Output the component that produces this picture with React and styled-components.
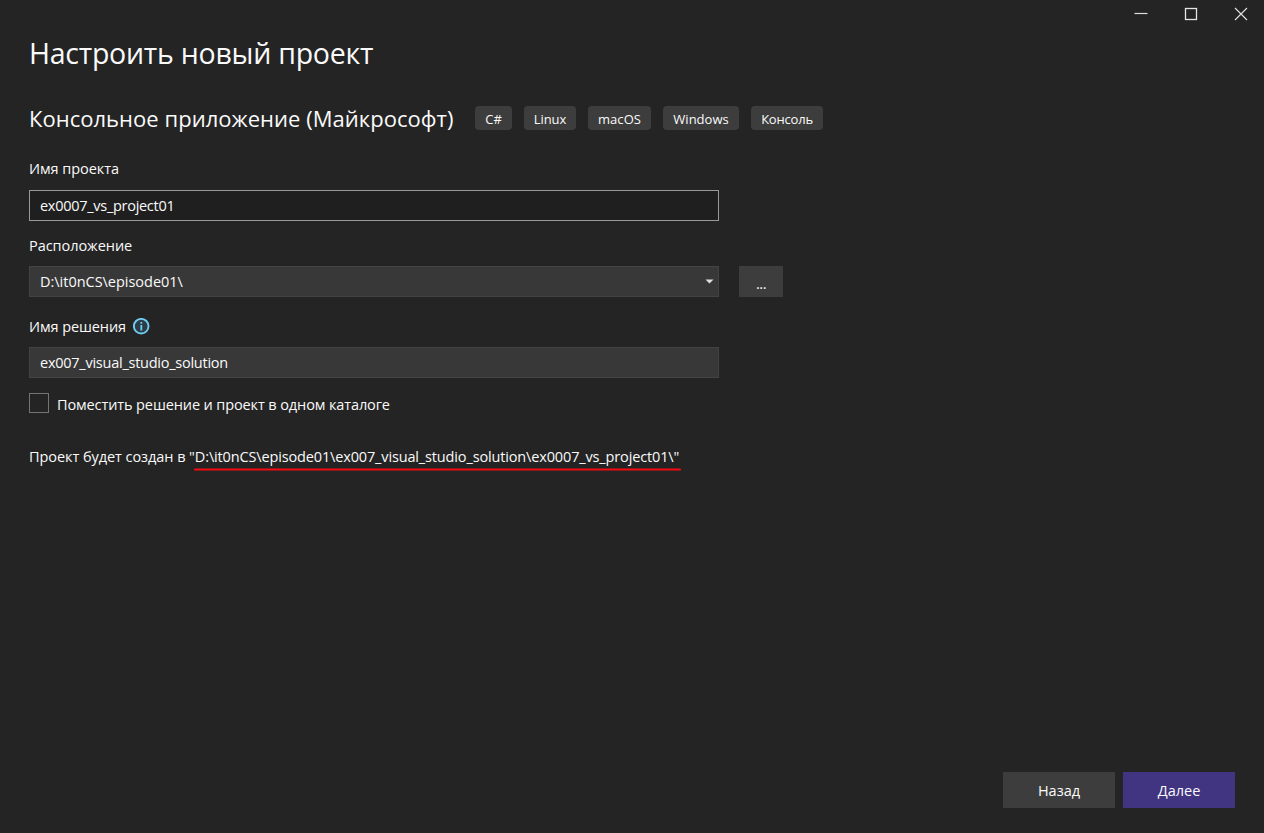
import React from "react";
import styled, { createGlobalStyle } from "styled-components";

const GlobalStyle = createGlobalStyle`
  *, *::before, *::after { box-sizing: border-box; }
  body {
    margin: 0;
    background: #242424;
    color: #fafafa;
    font-family: "Open Sans", "Noto Sans", sans-serif;
    font-size: 14.5px;
    overflow: hidden;
  }
  button, input { font: inherit; color: inherit; }
`;

const Window = styled.div`
  width: 1264px;
  height: 833px;
  display: flex;
  flex-direction: column;
  background: #242424;
`;

const TitleBar = styled.header`
  height: 28px;
  flex: none;
  display: flex;
  justify-content: flex-end;
  padding-right: 2px;
`;

const WindowButton = styled.button`
  width: 42px;
  height: 28px;
  margin-left: 8px;
  padding: 0;
  border: 0;
  background: none;
  display: flex;
  align-items: center;
  justify-content: center;
  svg { display: block; }
`;

const Content = styled.main`
  flex: 1;
  display: flex;
  flex-direction: column;
  align-items: flex-start;
  padding-left: 29px;
`;

const Text = styled.span`
  display: block;
  white-space: pre;
  letter-spacing: ${(p) => p.$track || 0}px;
`;

const Title = styled.h1`
  margin: 3px 0 0;
  height: 44px;
  line-height: 44px;
  font-size: 28.5px;
  font-weight: 400;
`;

const Heading = styled.div`
  margin-top: 31px;
  height: 24px;
  display: flex;
  align-items: center;
`;

const Subtitle = styled.h2`
  margin: 0;
  width: 446px;
  line-height: 26px;
  font-size: 22px;
  font-weight: 400;
`;

const Chips = styled.div`
  display: flex;
  gap: 12px;
`;

const Chip = styled.span`
  width: ${(p) => p.$width}px;
  height: 24px;
  padding-top: 2px;
  border-radius: 4px;
  background: #3d3d3d;
  font-size: 13px;
  line-height: 22px;
  display: flex;
  justify-content: center;
`;

const Label = styled.label`
  height: 20px;
  margin-top: ${(p) => p.$top}px;
  line-height: 22px;
  display: flex;
  gap: 7px;
  svg { display: block; margin-top: 2px; }
`;

const Row = styled.div`
  display: flex;
  gap: 20px;
  margin-top: ${(p) => p.$top}px;
`;

const Field = styled.div`
  width: 690px;
  height: 31px;
  padding: 0 4px 0 10px;
  border: 1px solid ${(p) => (p.$active ? "#999999" : "#434343")};
  background: ${(p) => (p.$active ? "#1f1f1f" : "#383838")};
  line-height: 29px;
  display: flex;
  justify-content: space-between;
  align-items: center;
`;

const BrowseButton = styled.button`
  width: 44px;
  height: 31px;
  padding: 4px 0 0;
  border: 0;
  background: #3d3d3d;
  line-height: 27px;
  display: flex;
  justify-content: center;
`;

const CheckRow = styled.label`
  display: flex;
  gap: 8px;
  margin-top: 15px;
  height: 20px;
  line-height: 24px;
`;

const CheckBox = styled.input`
  appearance: none;
  width: 20px;
  height: 20px;
  margin: 0;
  border: 1px solid #747474;
  background: #242424;
`;

const Summary = styled.p`
  margin: 33px 0 0;
  height: 25px;
  line-height: 22px;
  display: flex;
`;

const Path = styled.span`
  height: 25px;
  width: 487px;
  display: flex;
  flex-direction: column;
  justify-content: space-between;
  margin-left: -1px;
`;

const PathText = styled(Text)`
  padding-left: 1px;
`;

const RedLine = styled.svg`
  display: block;
  flex: none;
`;

const Footer = styled.footer`
  display: flex;
  justify-content: flex-end;
  gap: 8px;
  padding: 0 29px 25px 0;
`;

const ActionButton = styled.button`
  width: 112px;
  height: 36px;
  padding: 0;
  border: 0;
  background: ${(p) => (p.$primary ? "#413480" : "#3d3d3d")};
  line-height: 38px;
  display: flex;
  justify-content: center;
`;

const chips = [
  { name: "C#", width: 37, track: 0 },
  { name: "Linux", width: 52, track: -0.1 },
  { name: "macOS", width: 63, track: 0.1 },
  { name: "Windows", width: 76, track: 0 },
  { name: "Консоль", width: 72, track: -0.2 },
];

export default function App() {
  return (
    <Window>
      <GlobalStyle />
      <TitleBar>
        <WindowButton aria-label="Свернуть">
          <svg width="14" height="14" viewBox="0 0 14 14">
            <path d="M0.5 6.5h13" stroke="#dcdcdc" strokeWidth="1.2" />
          </svg>
        </WindowButton>
        <WindowButton aria-label="Развернуть">
          <svg width="14" height="14" viewBox="0 0 14 14">
            <rect x="1.5" y="1.5" width="11" height="11" fill="none" stroke="#e4e4e4" strokeWidth="1.3" />
          </svg>
        </WindowButton>
        <WindowButton aria-label="Закрыть">
          <svg width="14" height="14" viewBox="0 0 14 14">
            <path d="M1 1l12 12M13 1L1 13" stroke="#e4e4e4" strokeWidth="1.1" />
          </svg>
        </WindowButton>
      </TitleBar>
      <Content>
        <Title><Text $track={-0.25}>Настроить новый проект</Text></Title>
        <Heading>
          <Subtitle><Text $track={0.03}>Консольное приложение (Майкрософт)</Text></Subtitle>
          <Chips>
            {chips.map((c) => (
              <Chip key={c.name} $width={c.width}><Text $track={c.track}>{c.name}</Text></Chip>
            ))}
          </Chips>
        </Heading>
        <Label $top={28}><Text $track={-0.05}>Имя проекта</Text></Label>
        <Row $top={12}>
          <Field $active><Text $track={-0.28}>ex0007_vs_project01</Text></Field>
        </Row>
        <Label $top={14}><Text $track={-0.05}>Расположение</Text></Label>
        <Row $top={11}>
          <Field>
            <Text $track={-0.02}>D:\it0nCS\episode01\</Text>
            <svg width="9" height="5" viewBox="0 0 9 5">
              <path d="M0.5 0.5h8l-4 4z" fill="#e0e0e0" />
            </svg>
          </Field>
          <BrowseButton><Text $track={-0.4}>...</Text></BrowseButton>
        </Row>
        <Label $top={19}>
          <Text $track={-0.08}>Имя решения</Text>
          <svg width="17" height="17" viewBox="0 0 17 17">
            <circle cx="8.2" cy="8.2" r="7.3" fill="#2b3c45" stroke="#6fcdf2" strokeWidth="1.9" />
            <path d="M8.3 7v5.4M8.3 4v1.7" stroke="#6fcdf2" strokeWidth="1.8" />
          </svg>
        </Label>
        <Row $top={11}>
          <Field><Text $track={-0.25}>ex007_visual_studio_solution</Text></Field>
        </Row>
        <CheckRow>
          <CheckBox type="checkbox" />
          <Text $track={-0.11}>Поместить решение и проект в одном каталоге</Text>
        </CheckRow>
        <Summary>
          <Text $track={-0.06}>Проект будет создан в "</Text>
          <Path>
            <PathText $track={-0.145}>D:\it0nCS\episode01\ex007_visual_studio_solution\ex0007_vs_project01\"</PathText>
            <RedLine width="487" height="3" viewBox="0 0 487 3">
              <path d="M1 1.5h485" stroke="#f50a10" strokeWidth="2.2" strokeLinecap="round" />
            </RedLine>
          </Path>
        </Summary>
      </Content>
      <Footer>
        <ActionButton><Text $track={0}>Назад</Text></ActionButton>
        <ActionButton $primary><Text $track={0}>Далее</Text></ActionButton>
      </Footer>
    </Window>
  );
}
